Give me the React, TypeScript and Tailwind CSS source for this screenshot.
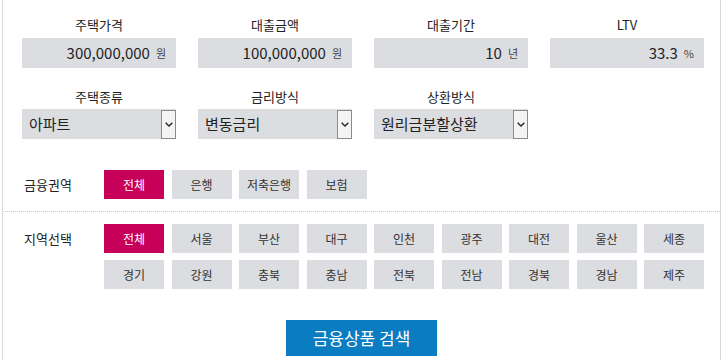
import React from 'react';

const font = { fontFamily: '"Malgun Gothic", "Noto Sans CJK KR", "Noto Sans", sans-serif' };

const amounts = [
  { label: '주택가격', value: '300,000,000', unit: '원' },
  { label: '대출금액', value: '100,000,000', unit: '원' },
  { label: '대출기간', value: '10', unit: '년' },
  { label: 'LTV', value: '33.3', unit: '%' },
];

const selects = [
  { label: '주택종류', value: '아파트' },
  { label: '금리방식', value: '변동금리' },
  { label: '상환방식', value: '원리금분할상환' },
];

const sectors = ['전체', '은행', '저축은행', '보험'];
const regions = ['전체', '서울', '부산', '대구', '인천', '광주', '대전', '울산', '세종', '경기', '강원', '충북', '충남', '전북', '전남', '경북', '경남', '제주'];

function Chip({ text, active }: { text: string; active?: boolean }) {
  return (
    <button
      className={`h-[29px] w-[60px] text-[12px] ${active ? 'bg-[#c7005a] text-white' : 'bg-[#dcdde1] text-[#333]'}`}
    >
      {text}
    </button>
  );
}

export default function App() {
  return (
    <div className="h-[360px] w-[723px] overflow-hidden bg-white text-[#222]" style={font}>
      <div className="mx-[2px] h-full w-[719px] border-x border-[#d9d9d9]">
        <div className="pl-[19px] pt-[16px]">
          <div className="grid w-[682px] grid-cols-4 gap-x-[22px]">
            {amounts.map((a) => (
              <div key={a.label}>
                <div className="mb-[4px] text-center text-[13px] leading-[18px]">{a.label}</div>
                <div className="flex h-[30px] items-center justify-end bg-[#dcdde1] pr-[10px]">
                  <span className="text-[15px]">{a.value}</span>
                  <span className="ml-[6px] text-[11px] text-[#444]">{a.unit}</span>
                </div>
              </div>
            ))}
          </div>

          <div className="mt-[20px] grid w-[682px] grid-cols-4 gap-x-[22px]">
            {selects.map((s) => (
              <div key={s.label}>
                <div className="mb-[3px] text-center text-[13px] leading-[18px]">{s.label}</div>
                <div className="flex h-[30px] items-center bg-[#dcdde1]">
                  <span className="flex-1 pl-[7px] text-[15px]">{s.value}</span>
                  <span className="flex h-[29px] w-[15px] items-center justify-center border border-[#8a8a8a] bg-[#f4f4f4]">
                    <svg width="8" height="5" viewBox="0 0 8 5">
                      <path d="M0.7 0.7 L4 4 L7.3 0.7" fill="none" stroke="#222" strokeWidth="1.4" />
                    </svg>
                  </span>
                </div>
              </div>
            ))}
          </div>
        </div>

        <div className="mt-[31px] flex border-b border-dotted border-[#c8c8c8] pb-[12px] pl-[21px]">
          <div className="flex h-[29px] w-[80px] items-center text-[13px]">금융권역</div>
          <div className="flex gap-x-[7.5px]">
            {sectors.map((t, i) => (
              <Chip key={t} text={t} active={i === 0} />
            ))}
          </div>
        </div>

        <div className="flex pl-[21px] pt-[12px]">
          <div className="flex h-[29px] w-[80px] items-center text-[13px]">지역선택</div>
          <div className="grid w-[600px] grid-cols-9 gap-x-[7.5px] gap-y-[7px]">
            {regions.map((t, i) => (
              <Chip key={t + i} text={t} active={i === 0} />
            ))}
          </div>
        </div>

        <div className="mt-[31px] flex justify-center">
          <button className="h-[36px] w-[151px] bg-[#0a7cc1] text-[17px] text-white">금융상품 검색</button>
        </div>
      </div>
    </div>
  );
}
